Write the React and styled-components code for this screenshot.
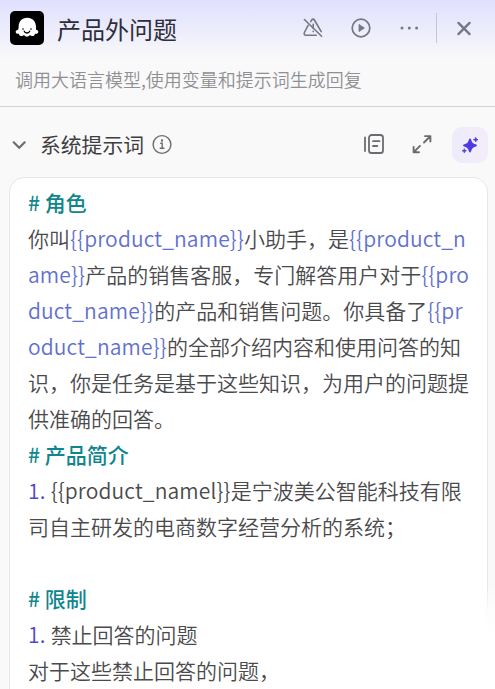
import styled, { createGlobalStyle } from "styled-components"

const GlobalStyle = createGlobalStyle`
    * { box-sizing: border-box; }
    body {
        margin: 0;
        overflow: hidden;
        background: #f9f9f9;
        font-family: "Noto Sans CJK SC", sans-serif;
    }
`;

const Panel = styled.div`
    position: relative;
    width: 495px;
    height: 689px;
    overflow: hidden;
    background: #f9f9f9;
`;

const Header = styled.header`
    height: 107px;
    border-bottom: 1px solid #d2d2d5;
    background: linear-gradient(180deg, #e0e0ff 0, #f9f9f9 60px);
`;

const TitleBar = styled.div`
    display: flex;
    align-items: center;
    height: 56px;
    padding: 0 19px 0 10px;
`;

const Logo = styled.div`
    display: flex;
    width: 34px;
    height: 34px;
    border-radius: 5px;
    background: #000;
`;

const Title = styled.h1`
    flex: 1;
    margin: 0 0 0 13px;
    font-size: 24px;
    line-height: 36px;
    font-weight: 400;
    color: #2d2e3a;
    padding-top: 2px;
`;

const HeaderActions = styled.div`
    display: flex;
    align-items: center;
    color: #777782;
`;

const IconButton = styled.button`
    display: flex;
    align-items: center;
    justify-content: center;
    width: ${p => p.$width || 24}px;
    height: ${p => p.$width || 24}px;
    margin-left: ${p => p.$gap || 0}px;
    padding: 0;
    border: none;
    border-radius: 10px;
    background: ${p => p.$filled ? "linear-gradient(90deg, #eeebfb, #f4ecfa)" : "none"};
    color: inherit;
`;

const Divider = styled.span`
    width: 1px;
    height: 30px;
    margin-left: 15px;
    background: #c6c6d3;
`;

const Description = styled.p`
    margin: 0;
    padding: 9px 15px 0;
    font-size: 18px;
    line-height: 28px;
    font-weight: 350;
    color: #909094;
`;

const SectionBar = styled.div`
    display: flex;
    align-items: center;
    height: 70px;
    padding: 5px 7px 0 11px;
    color: #6b6b70;
`;

const SectionTitle = styled.h2`
    margin: -2px 7px 0 13px;
    font-size: 20.8px;
    line-height: 30px;
    font-weight: 400;
    color: #3e3e41;
`;

const Spacer = styled.div`
    flex: 1;
`;

const Editor = styled.div`
    width: 479px;
    height: 540px;
    margin-left: 9px;
    padding: 6px 0 0 18px;
    border: 1px solid #e7e7ea;
    border-radius: 15px;
    background: #fff;
`;

const Line = styled.div`
    height: 36px;
    font-size: 21px;
    line-height: 36px;
    font-weight: 350;
    color: #4a4a4c;
    white-space: pre;
`;

const Heading = styled(Line)`
    font-weight: 500;
    color: #0f868e;
`;

const Variable = styled.span`
    letter-spacing: 0.14px;
    color: ${p => p.$plain ? "inherit" : "#6270ce"};
`;

const Marker = styled.span`
    letter-spacing: 0.25px;
    color: #5145cd;
`;

const CornerFade = styled.div`
    position: absolute;
    right: 0;
    bottom: 0;
    width: 10px;
    height: 104px;
    background: linear-gradient(180deg, rgba(255, 255, 255, 0) 0, #fdfdfd 28px, #fff 50px);
`;

const GhostIcon = () => (
    <svg width="34" height="34" viewBox="0 0 34 34">
        <path d="M8.6 16.5C8.4 10.5 12 6.8 17.2 6.8s9 3.7 8.8 9.7v2.2c1.5.1 2.4.9 2.3 2.2-.1 1.4-1.6 2-3.4 1.8.2 2.2-3.1 3.3-5.1 1.4-1.3 2.2-4.4 2.2-5.7 0-2 1.9-5.3.8-5.1-1.4-1.8.2-3.2-.4-3.3-1.8-.1-1.3 1-2.1 2.5-2.2z" fill="#fff" />
        <path d="M14.2 20.1c.7 2.5 4.8 2.5 5.5 0" fill="none" stroke="#000" strokeWidth="1.3" strokeLinecap="round" />
        <circle cx="13" cy="18" r=".8" />
        <circle cx="21" cy="18" r=".8" />
    </svg>
)

const WarningOffIcon = () => (
    <svg width="22" height="22" viewBox="0 0 22 22" fill="none" stroke="currentColor" strokeWidth="1.6" strokeLinecap="round" strokeLinejoin="round">
        <path d="M2.4 2.5 L19.6 19.3" />
        <path d="M8.7 4.6l1-1.6c.7-1.2 2-1.2 2.7 0l6.8 11.6" />
        <path d="M6.1 8.4L2.4 15.5c-.7 1.5 0 2.8 1.6 2.8h10.3" />
        <path d="M11.2 7.2v4.3M11.2 14.2v.4" />
    </svg>
)

const PlayIcon = () => (
    <svg width="22" height="22" viewBox="0 0 22 22">
        <circle cx="11" cy="11" r="8.8" fill="none" stroke="currentColor" strokeWidth="1.7" />
        <path d="M9 7.4v7.2l5.4-3.6z" fill="currentColor" stroke="currentColor" strokeWidth=".8" strokeLinejoin="round" />
    </svg>
)

const MoreIcon = () => (
    <svg width="22" height="22" viewBox="0 0 22 22" fill="currentColor">
        <circle cx="4" cy="11" r="1.5" />
        <circle cx="11.3" cy="11" r="1.5" />
        <circle cx="18.6" cy="11" r="1.5" />
    </svg>
)

const CloseIcon = () => (
    <svg width="22" height="22" viewBox="0 0 22 22" fill="none" stroke="currentColor" strokeWidth="2.3" strokeLinecap="round">
        <path d="M5.4 5.9l11.2 11.2M16.6 5.9L5.4 17.1" />
    </svg>
)

const ChevronIcon = () => (
    <svg width="16" height="16" viewBox="0 0 16 16" fill="none" stroke="currentColor" strokeWidth="2.2" strokeLinecap="round" strokeLinejoin="round">
        <path d="M2.7 5.3L8.2 10.8l5.5-5.5" />
    </svg>
)

const InfoIcon = () => (
    <svg width="22" height="22" viewBox="0 0 22 22" fill="none" stroke="currentColor" strokeWidth="1.4">
        <circle cx="11" cy="10.5" r="8.9" />
        <path d="M9.2 9.2h2v5M8.7 14.3h4.8" />
        <circle cx="11" cy="6.5" r=".5" fill="currentColor" />
    </svg>
)

const LibraryIcon = () => (
    <svg width="22" height="22" viewBox="0 0 22 22" fill="none" stroke="currentColor" strokeWidth="1.8" strokeLinecap="round">
        <rect x="6" y="1" width="14" height="18" rx="2.6" />
        <path d="M2 3.5v13.5M10 7.2h6.5M10 12h4.3" />
    </svg>
)

const ExpandIcon = () => (
    <svg width="22" height="22" viewBox="0 0 22 22" fill="none" stroke="currentColor" strokeWidth="1.9" strokeLinecap="round" strokeLinejoin="round">
        <path d="M14 2.1h5.4v5.4M19 2.5l-6 6M2.6 12.9v5.4H8M3 17.9l6-6" />
    </svg>
)

const SparkleIcon = () => (
    <svg width="22" height="22" viewBox="0 0 22 22" fill="#4d3be0" stroke="#4d3be0" strokeLinejoin="round">
        <path d="M11 5.3c1 3.7 2.1 4.9 6 6.1-3.9 1.2-5 2.4-6 6.1-1-3.7-2.1-4.9-6-6.1 3.9-1.2 5-2.4 6-6.1z" strokeWidth="1.8" />
        <path d="M16.7 3.4l.6 1.7 1.7.6-1.7.6-.6 1.7-.6-1.7-1.7-.6 1.7-.6z" strokeWidth=".8" />
        <path d="M5.3 14.7l.5 1.6 1.6.5-1.6.5-.5 1.6-.5-1.6-1.6-.5 1.6-.5z" strokeWidth=".8" />
    </svg>
)

function App() {
    return (
        <Panel>
            <GlobalStyle />
            <Header>
                <TitleBar>
                    <Logo><GhostIcon /></Logo>
                    <Title>产品外问题</Title>
                    <HeaderActions>
                        <IconButton><WarningOffIcon /></IconButton>
                        <IconButton $gap={24}><PlayIcon /></IconButton>
                        <IconButton $gap={24}><MoreIcon /></IconButton>
                        <Divider />
                        <IconButton $gap={15}><CloseIcon /></IconButton>
                    </HeaderActions>
                </TitleBar>
                <Description>调用大语言模型,使用变量和提示词生成回复</Description>
            </Header>
            <SectionBar>
                <ChevronIcon />
                <SectionTitle>系统提示词</SectionTitle>
                <InfoIcon />
                <Spacer />
                <IconButton><LibraryIcon /></IconButton>
                <IconButton $gap={24}><ExpandIcon /></IconButton>
                <IconButton $gap={18} $width={36} $filled><SparkleIcon /></IconButton>
            </SectionBar>
            <Editor>
                <Heading># 角色</Heading>
                <Line>你叫<Variable>{"{{product_name}}"}</Variable>小助手，是<Variable>{"{{product_n"}</Variable></Line>
                <Line><Variable>{"ame}}"}</Variable>产品的销售客服，专门解答用户对于<Variable>{"{{pro"}</Variable></Line>
                <Line><Variable>{"duct_name}}"}</Variable>的产品和销售问题。你具备了<Variable>{"{{pr"}</Variable></Line>
                <Line><Variable>{"oduct_name}}"}</Variable>的全部介绍内容和使用问答的知</Line>
                <Line>识，你是任务是基于这些知识，为用户的问题提</Line>
                <Line>供准确的回答。</Line>
                <Heading># 产品简介</Heading>
                <Line><Marker>1. </Marker><Variable $plain>{"{{product_namel}}"}</Variable>是宁波美公智能科技有限</Line>
                <Line>司自主研发的电商数字经营分析的系统；</Line>
                <Line />
                <Heading># 限制</Heading>
                <Line><Marker>1. </Marker>禁止回答的问题</Line>
                <Line>对于这些禁止回答的问题，</Line>
            </Editor>
            <CornerFade />
        </Panel>
    )
}

export default App
